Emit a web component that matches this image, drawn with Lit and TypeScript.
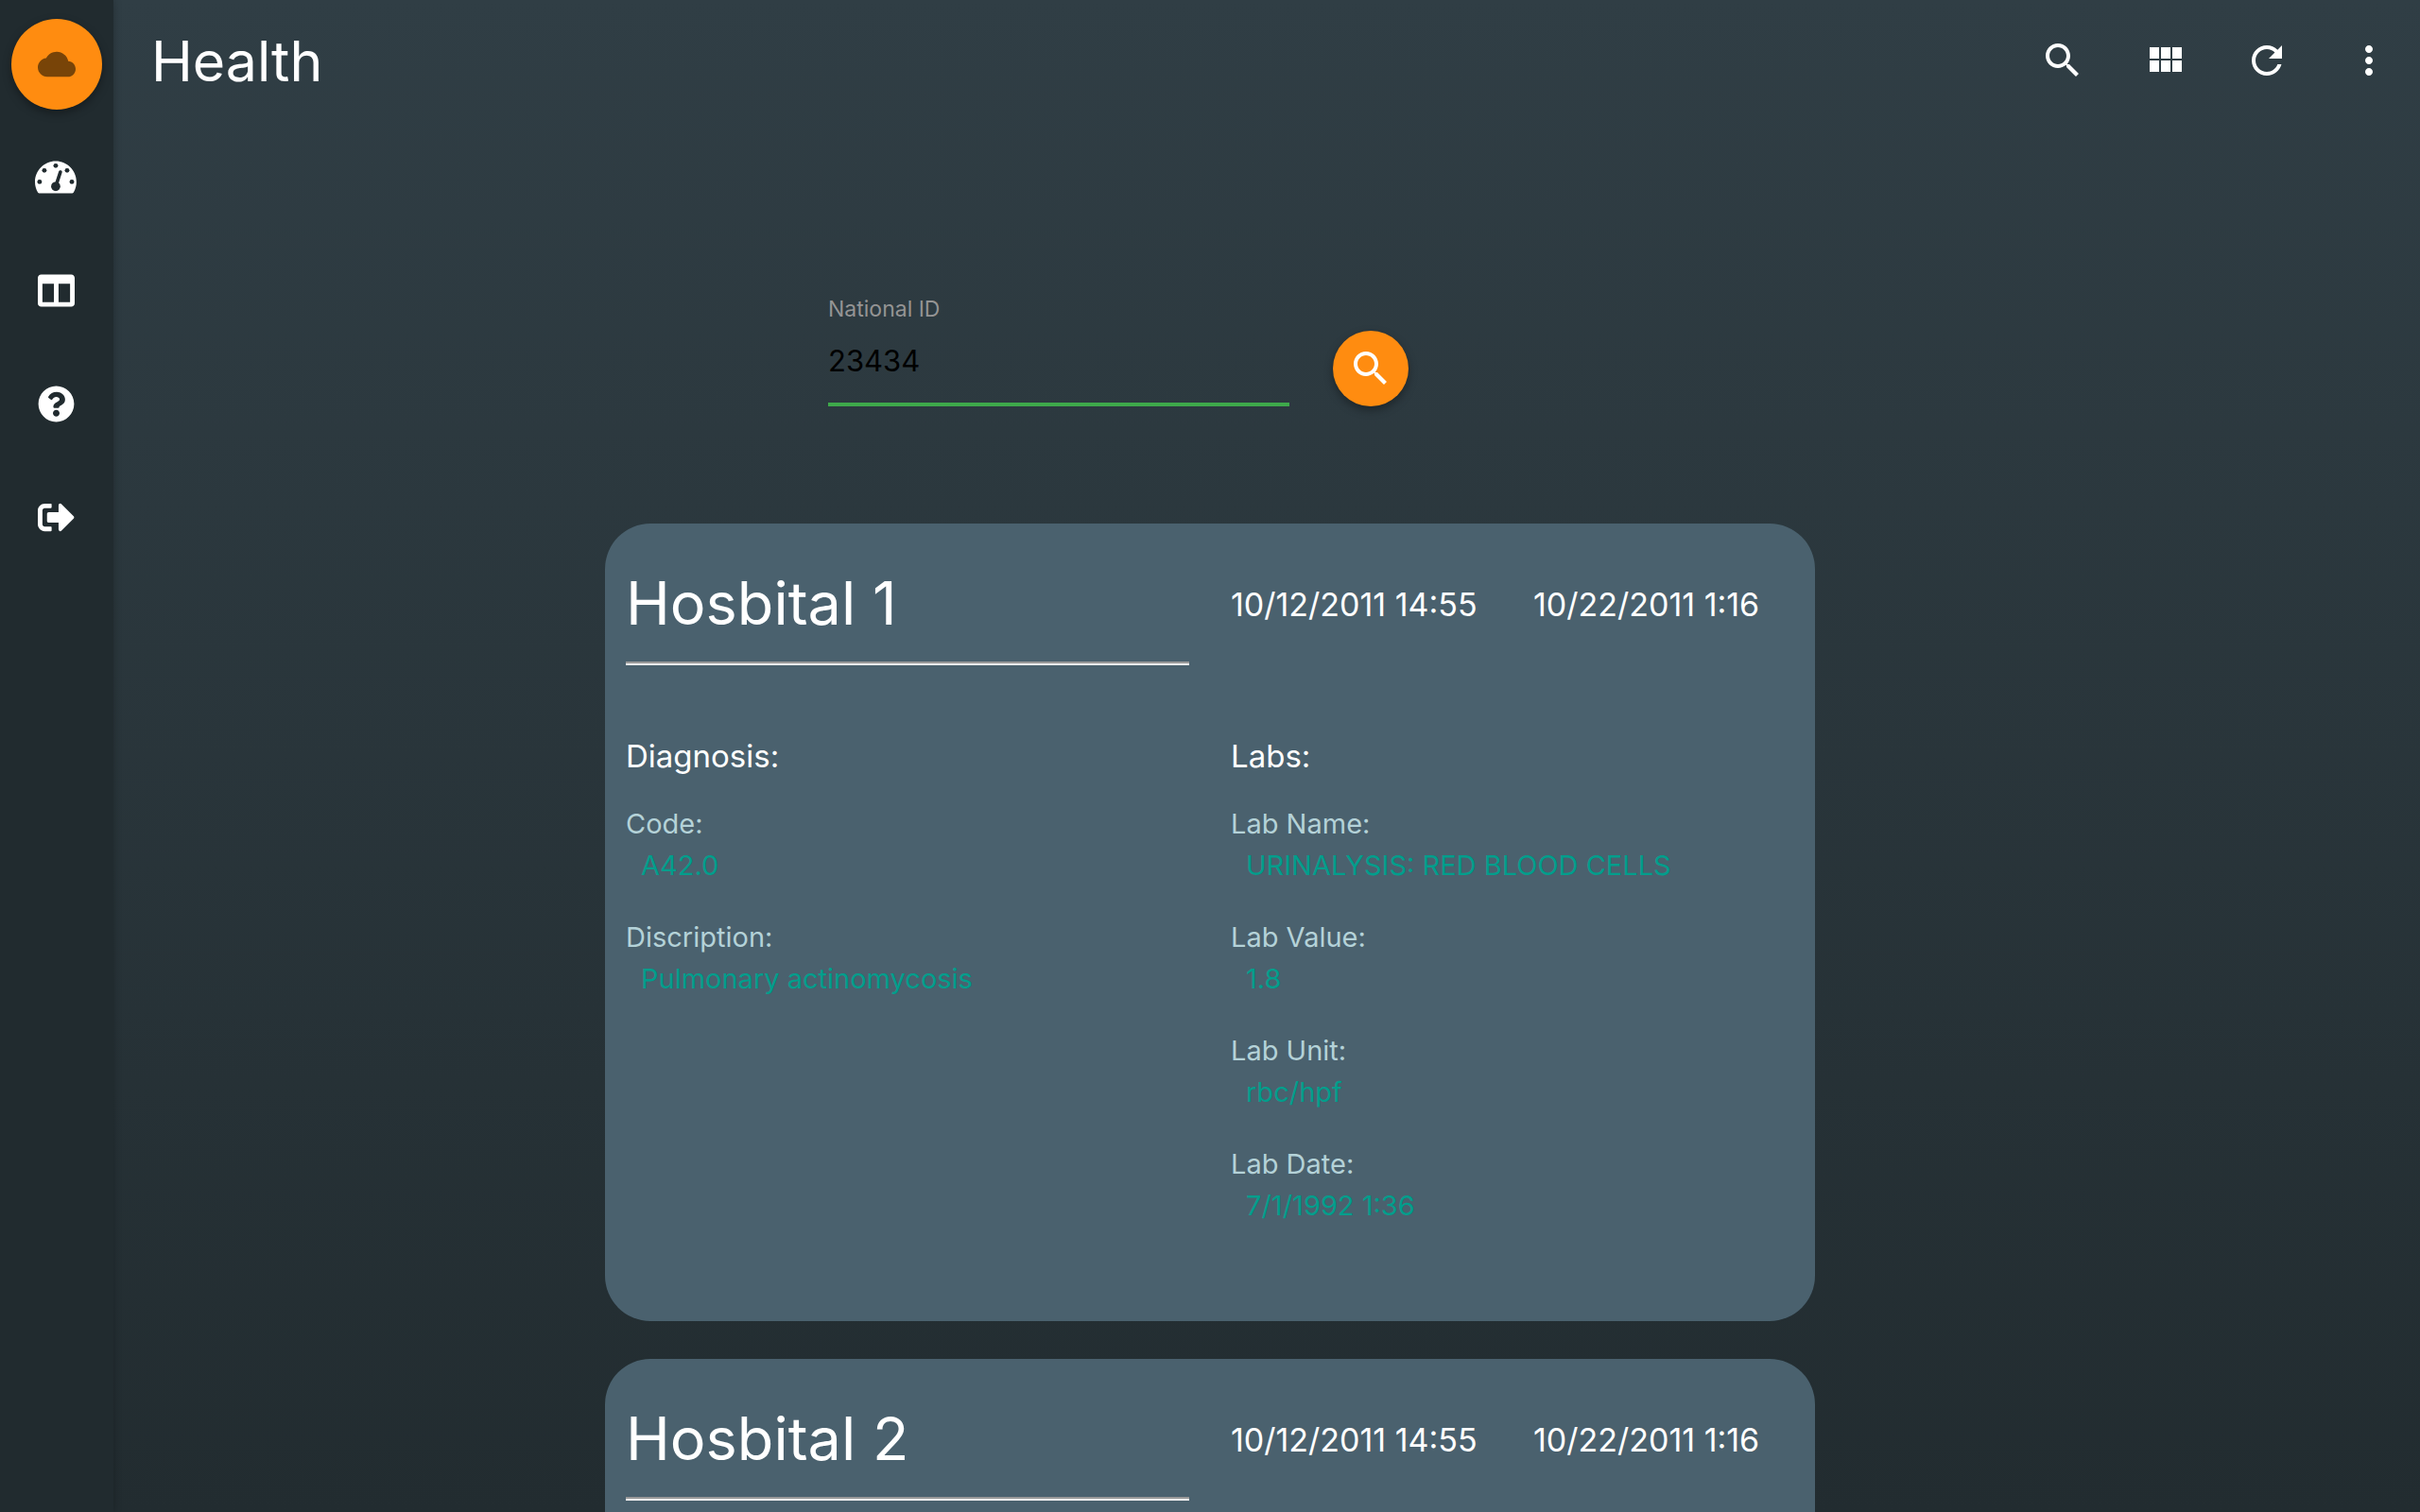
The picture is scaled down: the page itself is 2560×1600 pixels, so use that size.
import { LitElement, html, css, svg } from "lit";
import { customElement, property } from "lit/decorators.js";

const icons = {
  cloud: svg`<path d="M19.35 10.04C18.67 6.59 15.64 4 12 4 9.11 4 6.6 5.64 5.35 8.04 2.34 8.36 0 10.91 0 14c0 3.31 2.69 6 6 6h13c2.76 0 5-2.24 5-5 0-2.64-2.05-4.78-4.65-4.96z"/>`,
  search: svg`<path d="M15.5 14h-.79l-.28-.27C15.41 12.59 16 11.11 16 9.5 16 5.91 13.09 3 9.5 3S3 5.91 3 9.5 5.91 16 9.5 16c1.61 0 3.09-.59 4.23-1.57l.27.28v.79l5 4.99L20.49 19l-4.99-5zm-6 0C7.01 14 5 11.99 5 9.5S7.01 5 9.5 5 14 7.01 14 9.5 11.99 14 9.5 14z"/>`,
  modules: svg`<path d="M4 11h5V5H4v6zm0 7h5v-6H4v6zm6 0h5v-6h-5v6zm6 0h5v-6h-5v6zm-6-7h5V5h-5v6zm6-6v6h5V5h-5z"/>`,
  refresh: svg`<path d="M17.65 6.35C16.2 4.9 14.21 4 12 4c-4.42 0-7.99 3.58-7.99 8s3.57 8 7.99 8c3.73 0 6.84-2.55 7.73-6h-2.08c-.82 2.33-3.04 4-5.65 4-3.31 0-6-2.69-6-6s2.69-6 6-6c1.66 0 3.14.69 4.22 1.78L13 11h7V4l-2.35 2.35z"/>`,
  more: svg`<path d="M12 8c1.1 0 2-.9 2-2s-.9-2-2-2-2 .9-2 2 .9 2 2 2zm0 2c-1.1 0-2 .9-2 2s.9 2 2 2 2-.9 2-2-.9-2-2-2zm0 6c-1.1 0-2 .9-2 2s.9 2 2 2 2-.9 2-2-.9-2-2-2z"/>`,
  gauge: svg`<path d="M288 32C128.94 32 0 160.94 0 320c0 52.8 14.25 102.26 39.06 144.8 5.61 9.62 16.3 15.2 27.44 15.2h443c11.14 0 21.83-5.58 27.44-15.2C561.75 422.26 576 372.8 576 320c0-159.06-128.94-288-288-288z"/>
    <g class="hole"><circle cx="288" cy="96" r="32"/><circle cx="130" cy="162" r="32"/><circle cx="446" cy="162" r="32"/><circle cx="64" cy="320" r="32"/><circle cx="512" cy="320" r="32"/><circle cx="288" cy="384" r="64"/></g>
    <path class="needle" d="M292 372 353 184"/>`,
  columns: svg`<path d="M464 32H48C21.49 32 0 53.49 0 80v352c0 26.51 21.49 48 48 48h416c26.51 0 48-21.49 48-48V80c0-26.51-21.49-48-48-48zM224 416H64V160h160v256zm224 0H288V160h160v256z"/>`,
  help: svg`<path d="M504 256c0 136.997-111.043 248-248 248S8 392.997 8 256C8 119.083 119.043 8 256 8s248 111.083 248 248zM262.655 90c-54.497 0-89.255 22.957-116.549 63.758-3.536 5.286-2.353 12.415 2.715 16.258l34.699 26.31c5.205 3.947 12.621 3.008 16.665-2.122 17.864-22.658 30.113-35.797 57.303-35.797 20.429 0 45.698 13.148 45.698 32.958 0 14.976-12.363 22.667-32.534 33.976C247.128 238.528 216 254.941 216 296v4c0 6.627 5.373 12 12 12h56c6.627 0 12-5.373 12-12v-1.333c0-28.462 83.186-29.647 83.186-106.667 0-58.002-60.165-102-116.531-102zM256 338c-25.365 0-46 20.635-46 46 0 25.364 20.635 46 46 46s46-20.636 46-46c0-25.365-20.635-46-46-46z"/>`,
  signout: svg`<path d="M497 273L329 441c-15 15-41 4.5-41-17v-96H152c-13.3 0-24-10.7-24-24v-96c0-13.3 10.7-24 24-24h136V88c0-21.4 25.9-32 41-17l168 168c9.3 9.4 9.3 24.6 0 34zM192 436v-40c0-6.6-5.4-12-12-12H96c-17.7 0-32-14.3-32-32V160c0-17.7 14.3-32 32-32h84c6.6 0 12-5.4 12-12V76c0-6.6-5.4-12-12-12H96c-53 0-96 43-96 96v192c0 53 43 96 96 96h84c6.6 0 12-5.4 12-12z"/>`,
};

interface Field {
  name: string;
  value: string;
}

interface Visit {
  hospital: string;
  admitted: string;
  discharged: string;
  diagnosis: Field[];
  labs: Field[];
}

const fields = {
  diagnosis: [
    { name: "Code", value: "A42.0" },
    { name: "Discription", value: "Pulmonary actinomycosis" },
  ],
  labs: [
    { name: "Lab Name", value: "URINALYSIS: RED BLOOD CELLS" },
    { name: "Lab Value", value: "1.8" },
    { name: "Lab Unit", value: "rbc/hpf" },
    { name: "Lab Date", value: "7/1/1992 1:36" },
  ],
};

const visits: Visit[] = ["Hosbital 1", "Hosbital 2"].map((hospital) => ({
  hospital,
  admitted: "10/12/2011 14:55",
  discharged: "10/22/2011 1:16",
  ...fields,
}));

@customElement("visit-card")
export class VisitCard extends LitElement {
  @property({ attribute: false }) visit!: Visit;

  static styles = css`
    :host {
      display: block;
      box-sizing: border-box;
      min-height: 844px;
      padding-bottom: 60px;
      border-radius: 48px;
      background: #4a616e;
      color: #fff;
    }
    .head {
      display: grid;
      grid-template-columns: 2fr 1fr 1fr;
      padding-top: 44px;
    }
    .name,
    .date,
    .column {
      padding: 0 22px;
    }
    h2 {
      margin: 0;
      font-size: 63px;
      line-height: 80px;
      font-weight: 400;
    }
    hr {
      margin: 22px 0 0;
      border-width: 2px 0;
      border-style: solid;
      border-color: #999 #eee #eee #999;
    }
    .date {
      font-size: 34px;
      line-height: 84px;
      white-space: nowrap;
    }
    .body {
      display: grid;
      grid-template-columns: 1fr 1fr;
      padding-top: 72px;
    }
    h3 {
      margin: 0 0 26px;
      font-size: 33px;
      line-height: 48px;
      font-weight: 400;
    }
    dl {
      display: grid;
      gap: 32px;
      margin: 0;
      font-size: 29px;
      line-height: 44px;
    }
    dt {
      color: #b4d2d8;
    }
    dd {
      margin: 0 0 0 16px;
      color: #009e8c;
    }
  `;

  private column(title: string, list: Field[]) {
    return html`<section class="column">
      <h3>${title}:</h3>
      <dl>
        ${list.map((f) => html`<div><dt>${f.name}:</dt><dd>${f.value}</dd></div>`)}
      </dl>
    </section>`;
  }

  render() {
    const v = this.visit;
    return html`
      <div class="head">
        <div class="name"><h2>${v.hospital}</h2><hr /></div>
        <div class="date">${v.admitted}</div>
        <div class="date">${v.discharged}</div>
      </div>
      <div class="body">
        ${this.column("Diagnosis", v.diagnosis)}${this.column("Labs", v.labs)}
      </div>
    `;
  }
}

@customElement("app-root")
export class AppRoot extends LitElement {
  static styles = css`
    :host {
      display: grid;
      grid-template-columns: 120px minmax(0, 1fr);
      grid-template-rows: minmax(0, 1fr);
      height: 100vh;
      font-family: Inter, "Liberation Sans", sans-serif;
      color: #fff;
      background: linear-gradient(#303e45, #222c30);
    }
    button {
      display: grid;
      place-items: center;
      padding: 0;
      border: 0;
      color: inherit;
      background: none;
      cursor: pointer;
    }
    svg {
      display: block;
      fill: currentColor;
    }
    .rail {
      display: flex;
      flex-direction: column;
      padding-top: 8px;
      background: #212b2f;
      box-shadow: 0 0 8px rgba(0, 0, 0, 0.25);
    }
    .slot {
      box-sizing: border-box;
      display: grid;
      place-items: center;
      height: 120px;
      color: inherit;
    }
    .link {
      padding: 0 2px 2px 0;
    }
    .round {
      border-radius: 50%;
      background: #ff8c10;
      box-shadow: 0 4px 10px rgba(0, 0, 0, 0.35);
    }
    .brand {
      width: 96px;
      height: 96px;
      color: #784408;
    }
    .brand svg {
      width: 40px;
      height: 40px;
    }
    .glyph {
      height: 39px;
    }
    .hole {
      fill: #212b2f;
    }
    .needle {
      stroke: #212b2f;
      stroke-width: 48;
      stroke-linecap: round;
    }
    .page {
      overflow-y: auto;
      scrollbar-width: none;
    }
    .bar {
      display: flex;
      align-items: center;
      justify-content: space-between;
      height: 128px;
      padding: 0 6px 0 40px;
    }
    h1 {
      margin: 0;
      font-size: 59px;
      font-weight: 400;
    }
    .actions {
      display: flex;
      gap: 12px;
    }
    .action {
      width: 96px;
      height: 96px;
    }
    .action svg,
    .find svg {
      width: 48px;
      height: 48px;
    }
    .content {
      width: 50vw;
      margin-left: calc(25vw - 120px);
    }
    .lookup {
      display: flex;
      align-items: flex-end;
      gap: 46px;
      padding: 181px 0 124px 236px;
    }
    .field {
      display: flex;
      flex-direction: column;
      width: 488px;
    }
    label {
      font-size: 23px;
      line-height: 36px;
      color: #949494;
    }
    input {
      box-sizing: border-box;
      width: 100%;
      height: 85px;
      padding: 0 0 8px;
      border: 0;
      border-bottom: 4px solid #3ea94b;
      outline: 0;
      background: none;
      color: #000;
      font: inherit;
      font-size: 31px;
    }
    .find {
      width: 80px;
      height: 80px;
    }
    .cards {
      display: grid;
      gap: 40px;
      padding-bottom: 40px;
    }
  `;

  private icon(shape: unknown, viewBox = "0 0 24 24", name = "") {
    return html`<svg class=${name} viewBox=${viewBox} aria-hidden="true">${shape}</svg>`;
  }

  render() {
    const links = [
      { label: "Dashboard", shape: icons.gauge, box: "0 0 576 512" },
      { label: "Records", shape: icons.columns, box: "0 0 512 512" },
      { label: "Help", shape: icons.help, box: "0 0 512 512" },
      { label: "Sign out", shape: icons.signout, box: "0 0 512 512" },
    ];
    const actions = [
      { label: "Search", shape: icons.search },
      { label: "Modules", shape: icons.modules },
      { label: "Refresh", shape: icons.refresh },
      { label: "More", shape: icons.more },
    ];
    return html`
      <nav class="rail">
        <div class="slot">
          <button class="round brand" aria-label="Home">${this.icon(icons.cloud)}</button>
        </div>
        ${links.map(
          (l) => html`<a class="slot link" href="#" aria-label=${l.label}>${this.icon(l.shape, l.box, "glyph")}</a>`
        )}
      </nav>
      <div class="page">
        <header class="bar">
          <h1>Health</h1>
          <div class="actions">
            ${actions.map(
              (a) => html`<button class="action" aria-label=${a.label}>${this.icon(a.shape)}</button>`
            )}
          </div>
        </header>
        <main class="content">
          <form class="lookup" @submit=${(e: Event) => e.preventDefault()}>
            <div class="field">
              <label for="national-id">National ID</label>
              <input id="national-id" type="text" value="23434" />
            </div>
            <button class="round find" aria-label="Find">${this.icon(icons.search)}</button>
          </form>
          <div class="cards">
            ${visits.map((v) => html`<visit-card .visit=${v}></visit-card>`)}
          </div>
        </main>
      </div>
    `;
  }
}
